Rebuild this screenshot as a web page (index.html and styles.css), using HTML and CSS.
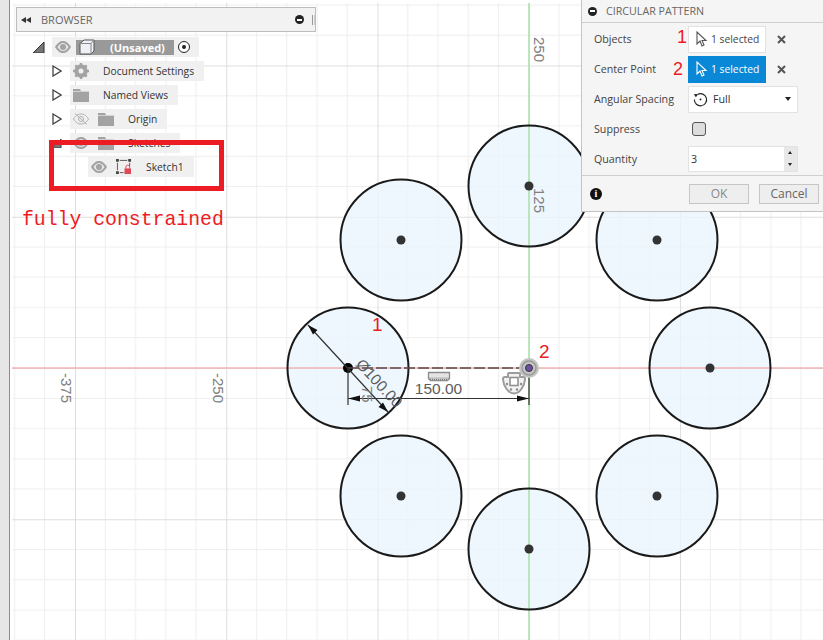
FILE: index.html
```html
<!DOCTYPE html>
<html lang="en">
<head>
    <meta charset="UTF-8">
    <meta name="viewport" content="width=device-width, initial-scale=1.0">
    <title>Circular Pattern</title>
    <link rel="stylesheet" href="styles.css">
</head>
<body>
    <svg class="icon-defs" width="0" height="0">
        <defs>
            <symbol id="eye" viewBox="0 0 16 12">
                <path d="M0 6C3 1 5.500 0 8 0s5 1 8 6c-3 5-5.500 6-8 6s-5-1-8-6z" fill="#a3a3a3"/>
                <path d="M2.500 6C4.500 3 6 2 8 2s3.500 1 5.500 4C11.500 9 10 10 8 10S4.500 9 2.500 6z" fill="#e6e6e6"/>
                <circle cx="8" cy="6" r="3" fill="#a3a3a3"/>
            </symbol>
            <symbol id="eye-off" viewBox="0 0 16 12">
                <path d="M.5 6C3 2 5.500 1 8 1s5 1 7.500 5C13 10 10.500 11 8 11S3 10 .5 6z" fill="none" stroke="#b0b0b0"/>
                <circle cx="8" cy="6" r="2.500" fill="none" stroke="#b0b0b0"/>
                <path d="M2 .5L14 11.500" stroke="#b0b0b0"/>
            </symbol>
            <symbol id="folder" viewBox="0 0 16 13">
                <path d="M0 0h7l1 2h8v11H0z" fill="#a3a3a3"/>
                <path d="M0 2.500h16" stroke="#e6e6e6" stroke-width=".7"/>
            </symbol>
            <symbol id="open" viewBox="0 0 10 12">
                <path d="M1 1l8 5-8 5z" fill="#fff" stroke="#444" stroke-width="1.300"/>
            </symbol>
            <symbol id="expanded" viewBox="0 0 12 11">
                <path d="M0 11L11 0v11z" fill="#777"/>
                <path d="M0 11L11 0v11z" fill="none" stroke="#333"/>
            </symbol>
            <symbol id="arrow" viewBox="0 0 12 16">
                <path d="M1 1v12l3-3 2 5 2-1-2-4.500h4z" fill="none" stroke="currentColor" stroke-width="1.100"/>
            </symbol>
        </defs>
    </svg>

    <div class="app">
        <div class="side-strip"></div>

        <!-- Sketch canvas -->
        <div class="canvas">
            <svg class="drawing" width="811" height="637" viewBox="12 3 811 637">
                <defs>
                    <pattern id="grid" width="151.250" height="151.250" patternUnits="userSpaceOnUse" patternTransform="translate(75 65.500)">
                        <path d="M30.250 0V151.250M60.500 0V151.250M90.750 0V151.250M121 0V151.250M0 30.250H151.250M0 60.500H151.250M0 90.750H151.250M0 121H151.250" stroke="#eeeeee" stroke-width="1" fill="none"/>
                        <path d="M.5 0V151.250M0 .5H151.250" stroke="#dedede" stroke-width="1" fill="none"/>
                    </pattern>
                    <circle id="hole-fill" r="60.500" fill="#e8f5fc" fill-opacity=".8"/>
                    <g id="hole-top">
                        <circle r="60.500" fill="none" stroke="#1a1a1a" stroke-width="2"/>
                        <circle r="4.500" fill="#333"/>
                    </g>
                </defs>
                <rect x="12" y="3" width="811" height="637" fill="url(#grid)"/>

                <use href="#hole-fill" x="348" y="368"/>
                <use href="#hole-fill" x="401" y="240"/>
                <use href="#hole-fill" x="529" y="186"/>
                <use href="#hole-fill" x="657" y="240"/>
                <use href="#hole-fill" x="710" y="368"/>
                <use href="#hole-fill" x="657" y="496"/>
                <use href="#hole-fill" x="529" y="549"/>
                <use href="#hole-fill" x="401" y="496"/>

                <path d="M12 368H823" stroke="#f2b3b3" stroke-width="1.500"/>
                <path d="M529 0V640" stroke="#a9e0a9" stroke-width="1.500"/>

                <use href="#hole-top" x="348" y="368"/>
                <use href="#hole-top" x="401" y="240"/>
                <use href="#hole-top" x="529" y="186"/>
                <use href="#hole-top" x="657" y="240"/>
                <use href="#hole-top" x="710" y="368"/>
                <use href="#hole-top" x="657" y="496"/>
                <use href="#hole-top" x="529" y="549"/>
                <use href="#hole-top" x="401" y="496"/>

                <!-- dimensions -->
                <circle cx="348" cy="368" r="5" fill="#000"/>
                <path d="M348 368H529" stroke="#5a4a4a" stroke-width="1.500" stroke-dasharray="11 3"/>
                <path d="M348 368V405M529 368V405M348 398.500H529M308 325L388 412" stroke="#333" stroke-width="1.200" fill="none"/>
                <path d="M348 398.500l12-3v6zM529 398.500l-12-3v6zM308 325l9.500 5-4.500 4.500zM388 412l-9.500-5 4.500-4.500z" fill="#111"/>
                <text class="dim-text" x="438.500" y="394" text-anchor="middle">150.00</text>
                <text class="dim-text" transform="translate(355 365) rotate(47)">Ø100.00</text>
                <text class="axis-label" transform="translate(362 386) rotate(90)">75</text>

                <!-- axis numbers -->
                <text class="axis-label" transform="translate(61 373) rotate(90)">-375</text>
                <text class="axis-label" transform="translate(212.500 373) rotate(90)">-250</text>
                <text class="axis-label" transform="translate(533.500 37) rotate(90)">250</text>
                <text class="axis-label" transform="translate(533.500 188) rotate(90)">125</text>

                <!-- centre point -->
                <circle cx="529" cy="368" r="10" fill="#c4c4c4"/>
                <circle cx="529" cy="368" r="7" fill="none" stroke="#999" stroke-width="1.500"/>
                <circle cx="529" cy="368" r="3.500" fill="#6a4fa3" stroke="#333"/>

                <!-- constraint glyphs -->
                <path d="M428.500 372.500h21v6h-21z" fill="#e4e4e4" stroke="#8c8c8c" stroke-width="1.300"/>
                <path d="M428.500 378.500l2 2h17l2-2" fill="#f0f0f0" stroke="#8c8c8c" stroke-width="1.300"/>
                <path d="M430 379.500h18" stroke="#777" stroke-dasharray="1 1"/>
                <path d="M509 373h10a1 1 0 0 1 1 1v3h3a2 2 0 0 1 2 2.500c-.5 6-5 14-11 14s-10.500-8-11-14a2 2 0 0 1 2-2.500h3v-3a1 1 0 0 1 1-1z" fill="#f2f2f2" stroke="#9c9c9c" stroke-width="2"/>
                <path d="M510 377.500h8v8h-8z" fill="#fff" stroke="#8c8c8c" stroke-width="1.500"/>
                <circle cx="507" cy="384" r="1.200" fill="#8c8c8c"/>
                <circle cx="521" cy="384" r="1.200" fill="#8c8c8c"/>
                <circle cx="511" cy="389.500" r="1.200" fill="#8c8c8c"/>
                <circle cx="517" cy="389.500" r="1.200" fill="#8c8c8c"/>

                <!-- callouts -->
                <text class="callout" x="372" y="331">1</text>
                <text class="callout" x="539" y="358">2</text>
            </svg>
        </div>
    </div>

    <!-- Browser tree -->
    <div class="browser">
        <div class="browser-head">
            <svg class="rewind" viewBox="0 0 10 6"><path d="M5 0v6L0 3zM10 0v6L5 3z" fill="#333"/></svg>
            <span class="browser-title">BROWSER</span>
            <span class="minus-dot"></span>
            <span class="grip"></span>
        </div>

        <div class="tree-row root-row">
            <svg class="toggle-expanded"><use href="#expanded"/></svg>
            <div class="row-box">
                <svg class="eye"><use href="#eye"/></svg>
                <div class="doc-name">
                    <svg class="doc-cube" viewBox="0 0 16 16">
                        <path d="M1 4.500L5 1h10v11l-3 3H1z" fill="#eef0f5" stroke="#555"/>
                        <path d="M1 4.500h11V15M12 4.500L15 1" fill="none" stroke="#888"/>
                    </svg>
                    <span>(Unsaved)</span>
                </div>
                <span class="radio"></span>
            </div>
        </div>

        <div class="tree-row">
            <svg class="toggle"><use href="#open"/></svg>
            <div class="row-box">
                <svg class="gear" viewBox="0 0 16 16">
                    <circle cx="8" cy="8" r="5" fill="none" stroke="#a3a3a3" stroke-width="3.400"/>
                    <path d="M8 0v16M0 8h16M2.300 2.300l11.400 11.400M13.700 2.300L2.300 13.700" stroke="#a3a3a3" stroke-width="2.400"/>
                    <circle cx="8" cy="8" r="2.500" fill="#f0f0f0"/>
                </svg>
                <span class="row-text">Document Settings</span>
            </div>
        </div>

        <div class="tree-row">
            <svg class="toggle"><use href="#open"/></svg>
            <div class="row-box">
                <svg class="folder"><use href="#folder"/></svg>
                <span class="row-text">Named Views</span>
            </div>
        </div>

        <div class="tree-row">
            <svg class="toggle"><use href="#open"/></svg>
            <div class="row-box">
                <svg class="eye"><use href="#eye-off"/></svg>
                <svg class="folder after-eye"><use href="#folder"/></svg>
                <span class="row-text">Origin</span>
            </div>
        </div>

        <div class="tree-row">
            <svg class="toggle-small"><use href="#expanded"/></svg>
            <div class="row-box">
                <svg class="eye"><use href="#eye"/></svg>
                <svg class="folder after-eye"><use href="#folder"/></svg>
                <span class="row-text">Sketches</span>
            </div>
        </div>

        <div class="tree-row sketch-row">
            <div class="row-box">
                <svg class="eye"><use href="#eye"/></svg>
                <svg class="sketch-icon" viewBox="0 0 17 16">
                    <path d="M4 1.500h8M1.500 4v8M4 14.500h4M14.500 4v4" stroke="#555" fill="none"/>
                    <path d="M0 0h3v3H0zM13 0h3v3h-3zM0 13h3v3H0z" fill="#444"/>
                    <path d="M9 10h7v6H9z" fill="#dc4a56"/>
                    <path d="M10.500 10V8.500a2 2 0 0 1 4 0V10" fill="none" stroke="#dc4a56"/>
                </svg>
                <span class="row-text">Sketch1</span>
            </div>
        </div>
    </div>

    <!-- Red annotation over the tree -->
    <div class="red-box"></div>
    <div class="red-note">fully constrained</div>

    <!-- Circular pattern dialog -->
    <div class="dialog">
        <div class="dialog-head">
            <span class="minus-dot"></span>
            <span class="dialog-title">CIRCULAR PATTERN</span>
        </div>
        <div class="dialog-body">
            <div class="field">
                <label class="field-label">Objects</label>
                <span class="callout-num">1</span>
                <div class="pick-button">
                    <svg class="pick-arrow"><use href="#arrow"/></svg>
                    <span class="field-text">1 selected</span>
                </div>
                <svg class="clear-x" viewBox="0 0 9 9"><path d="M1 1l7 7M8 1L1 8"/></svg>
            </div>
            <div class="field">
                <label class="field-label">Center Point</label>
                <span class="callout-num callout-two">2</span>
                <div class="pick-button pick-active">
                    <svg class="pick-arrow"><use href="#arrow"/></svg>
                    <span class="field-text">1 selected</span>
                </div>
                <svg class="clear-x" viewBox="0 0 9 9"><path d="M1 1l7 7M8 1L1 8"/></svg>
            </div>
            <div class="field">
                <label class="field-label">Angular Spacing</label>
                <div class="select-box">
                    <svg class="spin-icon" viewBox="0 0 16 16">
                        <path d="M5 2.500A6.500 6.500 0 1 1 1.500 8" fill="none" stroke="#222" stroke-width="1.200"/>
                        <path d="M1 2l4.500.5-2.500 3z" fill="#222"/>
                        <circle cx="8" cy="8" r="1" fill="#222"/>
                    </svg>
                    <span class="field-text">Full</span>
                    <span class="caret"></span>
                </div>
            </div>
            <div class="field">
                <label class="field-label">Suppress</label>
                <span class="check-box"></span>
            </div>
            <div class="field">
                <label class="field-label">Quantity</label>
                <div class="number-box">
                    <span class="number-value field-text">3</span>
                    <div class="spinner">
                        <span class="spin-up"></span>
                        <span class="spin-down"></span>
                    </div>
                </div>
            </div>
        </div>
        <div class="dialog-foot">
            <span class="info-dot">i</span>
            <button class="foot-button ok-button">OK</button>
            <button class="foot-button">Cancel</button>
        </div>
    </div>
</body>
</html>
```

FILE: styles.css
```css
body {
    margin: 0;
    background-color: #fff;
    font-family: "Open Sans", Arial, sans-serif;
    overflow: hidden;
}

.icon-defs {
    position: absolute;
}

/* Page frame */
.app {
    display: flex;
    width: 823px;
    height: 640px;
}

.side-strip {
    width: 9px;
    background-color: #e6e6e6;
    border-right: 1px solid #8c8c8c;
}

.canvas {
    flex: 1;
    position: relative;
}

.drawing {
    position: absolute;
    left: 2px;
    top: 3px;
}

.drawing text {
    font-family: "Liberation Sans", Arial, sans-serif;
}

.dim-text {
    font-size: 15.500px;
    fill: #5c5c5c;
}

.axis-label {
    font-size: 15px;
    fill: #808080;
}

.callout {
    font-size: 19px;
    fill: #ed1c24;
}

/* Browser tree */
.browser {
    position: absolute;
    left: 16px;
    top: 7px;
    width: 300px;
}

.browser-head {
    display: flex;
    align-items: center;
    height: 23px;
    background-color: #f2f2f2;
    border: 1px solid #bdbdbd;
    font-size: 11px;
    color: #666;
}

.rewind {
    width: 10px;
    height: 6px;
    margin: 0 10px 0 4px;
}

.browser-title {
    flex: 1;
}

.minus-dot {
    position: relative;
    width: 9px;
    height: 9px;
    border-radius: 50%;
    background-color: #222;
}

.minus-dot::after {
    content: "";
    position: absolute;
    left: 2px;
    top: 3.500px;
    width: 5px;
    height: 2px;
    background-color: #fff;
}

.grip {
    width: 1px;
    height: 10px;
    margin: 0 0 0 8px;
    border-left: 1px solid #999;
    border-right: 1px solid #ccc;
}

.tree-row {
    display: flex;
    align-items: center;
    height: 20px;
    margin-top: 4px;
    padding-left: 36px;
}

.root-row {
    margin-top: 5px;
    padding-left: 17px;
}

.sketch-row {
    height: 21px;
    margin-top: 3px;
    padding-left: 72px;
}

.toggle {
    width: 10px;
    height: 12px;
    margin-right: 8px;
}

.toggle-expanded {
    width: 12px;
    height: 11px;
    margin-right: 7px;
}

.toggle-small {
    width: 10px;
    height: 9px;
    margin-right: 8px;
}

.row-box {
    display: flex;
    align-items: center;
    height: 100%;
    padding-right: 10px;
    background-color: #f0f0f0;
    font-size: 10.300px;
    color: #333;
}

.eye {
    width: 16px;
    height: 12px;
    margin-left: 3px;
}

.folder {
    width: 16px;
    height: 13px;
    margin-left: 3px;
}

.folder.after-eye {
    margin-left: 9px;
}

.gear {
    width: 16px;
    height: 16px;
    margin-left: 3px;
}

.row-text {
    margin-left: 14px;
}

.doc-name {
    display: flex;
    align-items: center;
    width: 98px;
    height: 15px;
    margin-left: 5px;
    background-color: #999;
    color: #fff;
    font-size: 11px;
    font-weight: bold;
}

.doc-cube {
    width: 16px;
    height: 16px;
    margin-left: 3px;
}

.doc-name span {
    margin-left: 15px;
}

.radio {
    position: relative;
    width: 10px;
    height: 10px;
    margin-left: 4px;
    margin-right: -1px;
    border: 1.500px solid #222;
    border-radius: 50%;
    background-color: #fff;
}

.radio::after {
    content: "";
    position: absolute;
    left: 3px;
    top: 3px;
    width: 4px;
    height: 4px;
    border-radius: 50%;
    background-color: #222;
}

.sketch-icon {
    width: 16px;
    height: 15px;
    margin-left: 9px;
}

/* Red annotation */
.red-box {
    position: absolute;
    left: 49px;
    top: 140px;
    width: 165px;
    height: 41px;
    border: 5px solid #ed1c24;
}

.red-note {
    position: absolute;
    left: 22px;
    top: 209px;
    font-family: "Liberation Mono", "Courier New", monospace;
    font-size: 19.800px;
    line-height: 23px;
    color: #ed1c24;
}

/* Dialog */
.dialog {
    position: absolute;
    left: 581px;
    top: 0;
    width: 241px;
    height: 211px;
    display: flex;
    flex-direction: column;
    background-color: #f5f5f5;
    border: 1px solid #c4c4c4;
    border-top: none;
    font-size: 10.700px;
    color: #444;
}

.dialog-head {
    display: flex;
    align-items: center;
    gap: 9px;
    height: 22px;
    padding-left: 6px;
    border-bottom: 1px solid #cfcfcf;
}

.dialog-title {
    color: #666;
}

.dialog-body {
    flex: 1;
    padding-top: 1px;
}

.field {
    display: flex;
    align-items: center;
    height: 30px;
    padding-left: 12px;
    position: relative;
}

.field-label {
    width: 94px;
    flex: none;
}

.callout-num {
    position: absolute;
    left: 95px;
    top: 3px;
    font-family: "Liberation Sans", Arial, sans-serif;
    font-size: 18px;
    color: #ed1c24;
}

.callout-two {
    left: 91px;
    top: 5px;
}

.pick-button {
    display: flex;
    align-items: center;
    gap: 3px;
    width: 78px;
    height: 27px;
    box-sizing: border-box;
    padding-left: 7px;
    background-color: #fff;
    border: 1px solid #e2e2e2;
    font-size: 10.300px;
    color: #444;
}

.pick-active {
    background-color: #0a88d8;
    border-color: #0a88d8;
    color: #fff;
}

.pick-arrow {
    width: 12px;
    height: 16px;
    color: #555;
}

.pick-active .pick-arrow {
    color: #fff;
    fill: #fff;
}

.clear-x {
    width: 9px;
    height: 9px;
    margin-left: 11px;
    fill: none;
    stroke: #555;
    stroke-width: 2;
}

.select-box {
    display: flex;
    align-items: center;
    gap: 5px;
    width: 110px;
    height: 27px;
    box-sizing: border-box;
    padding: 0 6px 0 4px;
    background-color: #fff;
    border: 1px solid #e2e2e2;
    color: #333;
}

.spin-icon {
    width: 15px;
    height: 15px;
}

.caret {
    margin-left: auto;
    border-left: 3.500px solid transparent;
    border-right: 3.500px solid transparent;
    border-top: 4px solid #222;
}

.check-box {
    width: 12px;
    height: 12px;
    margin-left: 4px;
    background-color: #ddd;
    border: 1px solid #555;
    border-radius: 3px;
}

.number-box {
    display: flex;
    align-items: center;
    width: 110px;
    height: 26px;
    box-sizing: border-box;
    background-color: #fff;
    border: 1px solid #e2e2e2;
    color: #333;
}

.number-value {
    flex: 1;
    padding-left: 2px;
}

.spinner {
    display: flex;
    flex-direction: column;
    width: 13px;
    height: 100%;
    background-color: #e8e8e8;
}

.spin-up,
.spin-down {
    flex: 1;
    position: relative;
}

.spin-up::after,
.spin-down::after {
    content: "";
    position: absolute;
    left: 4px;
    top: 4px;
    border-left: 2.500px solid transparent;
    border-right: 2.500px solid transparent;
}

.spin-up::after {
    border-bottom: 3px solid #222;
}

.spin-down::after {
    border-top: 3px solid #222;
}

.dialog-foot {
    display: flex;
    align-items: center;
    height: 35px;
    padding: 0 4px 0 8px;
    border-top: 1px solid #cfcfcf;
}

.info-dot {
    width: 12px;
    height: 12px;
    border-radius: 50%;
    background-color: #111;
    color: #fff;
    font-family: "Liberation Serif", serif;
    font-size: 10px;
    font-weight: bold;
    line-height: 12px;
    text-align: center;
}

.foot-button {
    width: 60px;
    height: 20px;
    padding: 0;
    background-color: #eee;
    border: 1px solid #c6c6c6;
    font-family: inherit;
    font-size: 12px;
    color: #666;
}

.ok-button {
    margin-left: auto;
    margin-right: 10px;
    color: #888;
}
```
